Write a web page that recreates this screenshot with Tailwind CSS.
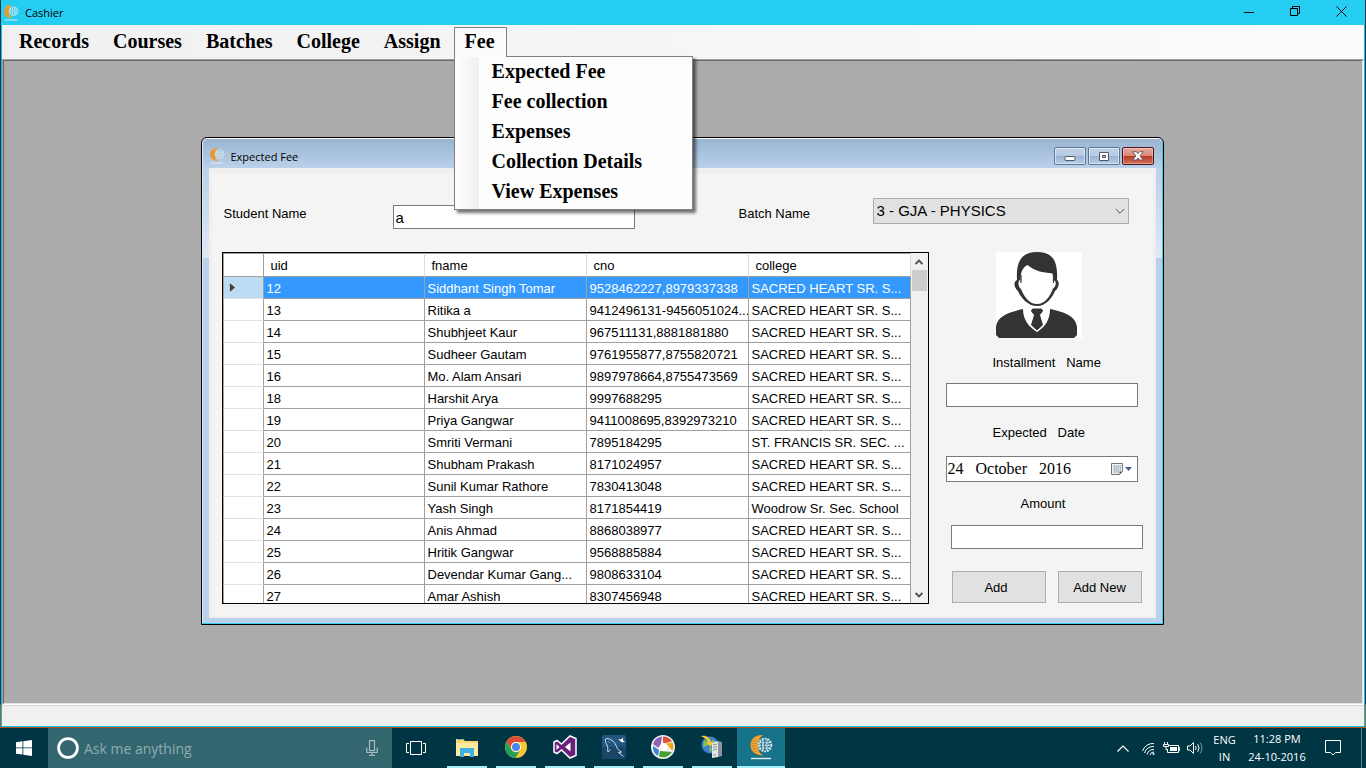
<!DOCTYPE html>
<html lang="en">
<head>
<meta charset="utf-8">
<title>Cashier</title>
<script src="https://cdn.jsdelivr.net/npm/@tailwindcss/browser@4"></script>
</head>
<body class="h-screen flex flex-col overflow-hidden bg-[#003644] font-['Liberation_Sans',sans-serif] text-[13px] text-black">

<svg class="hidden" aria-hidden="true">
  <symbol id="logo" viewBox="0 0 24 26">
    <path d="M14 1C5 .5 1.500 6 1.500 11.300S5 21.500 14 21.500C10.500 19.500 9 15.500 9 11.300S10.500 3.500 14 1Z" fill="#f2a12e"/>
    <path d="M3 7h5M2.500 9.500h5M2.500 12h5M3 14.500h5M4 17h5" stroke="#a88148" stroke-width=".6"/>
    <circle cx="16" cy="11" r="6.400" fill="none" stroke="#d3e4e8" stroke-width="1.800" stroke-dasharray="2 .9"/>
    <path d="M10.500 8.500h11M10 11.200h12M10.500 14h11" stroke="#d3e4e8" stroke-width="1.500" stroke-dasharray="2 .9"/>
    <path d="M14 5.500v11M18 5.500v11" stroke="#d3e4e8" stroke-width="1.400" stroke-dasharray="2 .9"/>
    <path d="M2 24.500h20" stroke="#e4eef2" stroke-width="1.400"/>
  </symbol>
</svg>

<div class="flex-1 min-h-0 flex flex-col border-x border-b [border-image:linear-gradient(#10343f_0%,#10343f_96.7%,#b5561a_96.8%,#b5561a_100%)_1]">
  <header class="h-[25px] shrink-0 flex items-center bg-[#26cdf2] pl-[2px] pr-px font-['Open_Sans',sans-serif] text-[11px]">
    <svg class="w-4 h-[17px] mr-[5px]"><use href="#logo"/></svg>
    <h1 class="flex-1 pl-px pt-px">Cashier</h1>
    <button aria-label="Minimize" class="w-[46px] h-full flex items-center justify-center"><svg class="size-[10px]" viewBox="0 0 10 10"><path d="M0 4.500h10" stroke="#000"/></svg></button>
    <button aria-label="Restore" class="w-[46px] h-full flex items-center justify-center pb-[3px]"><svg class="size-[10px]" viewBox="0 0 10 10" fill="none" stroke="#000"><path d="M.5 2.500h7v7h-7zM2.500 2.500v-2h7v7h-2"/></svg></button>
    <button aria-label="Close" class="w-[46px] h-full flex items-center justify-center pb-[2px]"><svg class="size-[11px]" viewBox="0 0 11 11" stroke="#000"><path d="M.5.5l10 10M10.500.5l-10 10"/></svg></button>
  </header>

  <div class="flex-1 min-h-0 flex flex-col border-x border-b border-[#00c3ee] bg-[#f0f0f0]">
    <nav class="h-[34px] shrink-0 flex items-start pt-[2px] pl-[5px] bg-linear-to-r from-[#f0f0f0] to-[#fcfcfc] font-['Liberation_Serif',serif] font-bold text-[20px] leading-[28px]">
      <button class="px-3">Records</button>
      <button class="px-3">Courses</button>
      <button class="px-3">Batches</button>
      <button class="px-3">College</button>
      <button class="px-3">Assign</button>
      <div class="relative z-20 ml-px leading-[27px]">
        <button class="relative z-10 h-[30px] pl-[10px] pr-[11px] border border-b-0 border-[#808080] bg-[#fbfbfb] flex" aria-expanded="true">Fee</button>
        <ul class="absolute left-0 top-[29px] w-[239px] pt-px pb-px border border-[#808080] bg-[linear-gradient(to_right,#fdfdfd_0px,#f0f0f0_24px,#fdfdfd_24px)] shadow-[3px_3px_3px_rgba(0,0,0,0.55)]">
          <li class="h-[30px]"><button class="w-full pl-[37px] text-left leading-[26px]">Expected Fee</button></li>
          <li class="h-[30px]"><button class="w-full pl-[37px] text-left leading-[26px]">Fee collection</button></li>
          <li class="h-[30px]"><button class="w-full pl-[37px] text-left leading-[26px]">Expenses</button></li>
          <li class="h-[30px]"><button class="w-full pl-[37px] text-left leading-[26px]">Collection Details</button></li>
          <li class="h-[30px]"><button class="w-full pl-[37px] text-left leading-[26px]">View Expenses</button></li>
        </ul>
      </div>
    </nav>

    <main class="flex-1 min-h-0 border-t border-l border-t-[#a0a0a0] border-l-[#a0a0a0] border-r border-b border-r-white border-b-white">
      <div class="h-full border border-t-[#696969] border-l-[#696969] border-r-[#e3e3e3] border-b-[#e3e3e3] bg-[#ababab] flex justify-center items-start pt-[76px] pr-[2px]">

        <section class="w-[963px] border border-black rounded-t-[6px] px-[7px] pb-[6px] bg-[linear-gradient(to_bottom,#98b3d1_0px,#b9d1ea_30px,#dfe9f5_120px,#b9d1ea_120px)] shadow-[inset_0_1px_0_#ffffff,inset_-1px_-1px_0_#35cdea,inset_1px_0_0_#d8ecf5]">
          <div class="h-[30px] flex items-start font-['Open_Sans',sans-serif] text-[11px]">
            <svg class="w-4 h-[17px] mt-[9px] mr-1"><use href="#logo"/></svg>
            <h2 class="flex-1 pl-[2px] mt-[11px] leading-4">Expected Fee</h2>
            <div class="flex gap-[2px] mt-[9px] mr-[2px]">
              <button aria-label="Minimize window" class="w-8 h-[18px] flex items-center justify-center rounded-[2px] border border-[#5b7697] bg-[linear-gradient(#c3d3e6_0%,#b6cae2_48%,#98b3d2_52%,#b5cde8_100%)] shadow-[inset_0_0_0_1px_rgba(255,255,255,0.5)]">
                <svg class="w-3 h-3" viewBox="0 0 12 12"><rect x="1" y="6.500" width="10" height="4" rx="1" fill="#fff" stroke="#535666"/></svg></button>
              <button aria-label="Maximize window" class="w-8 h-[18px] flex items-center justify-center rounded-[2px] border border-[#5b7697] bg-[linear-gradient(#c3d3e6_0%,#b6cae2_48%,#98b3d2_52%,#b5cde8_100%)] shadow-[inset_0_0_0_1px_rgba(255,255,255,0.5)]">
                <svg class="w-3 h-3" viewBox="0 0 12 12" stroke="#535666"><path d="M1.500 2.500h9v8h-9z" fill="#fff"/><path d="M4.500 5.500h3v2h-3z" fill="#a9bfda"/></svg></button>
              <button aria-label="Close window" class="w-8 h-[18px] flex items-center justify-center rounded-[2px] border border-[#4b1418] bg-[linear-gradient(#e8a99c_0%,#d98878_48%,#b93a24_52%,#d1705e_100%)] shadow-[inset_0_0_0_1px_rgba(255,255,255,0.35)]">
                <svg class="w-3 h-[10px]" viewBox="0 0 12 10"><path d="M.8.7h3.600L6 2.700 7.600.7h3.600L8 4.800 11.200 9H7.600L6 7 4.400 9H.8L4 4.800z" fill="#fff" stroke="#535666" stroke-width=".9"/></svg></button>
            </div>
          </div>

          <form class="bg-[#efefef] pt-[6px] px-[3px] pb-[2px]">
            <div class="bg-[#f4f4f4] pt-6 pl-[10px] pb-3">
              <div class="flex items-start h-[31px] mb-[23px]">
                <label for="student" class="w-[171px] pl-[2px] leading-[32px]">Student Name</label>
                <input id="student" value="a" class="w-[242px] h-6 mt-[7px] px-[2px] border border-[#7a7a7a] bg-white text-[15px] outline-none">
                <label for="batch" class="w-[238px] pl-[104px] leading-[32px]">Batch Name</label>
                <div class="relative w-[256px] h-[26px]">
                  <select id="batch" class="appearance-none w-full h-full pl-[3px] pt-px border border-[#adadad] bg-[#e1e1e1] text-[15px] outline-none"><option>3 - GJA - PHYSICS</option></select>
                  <svg class="absolute right-1 top-[10px] w-[10px] h-[7px] pointer-events-none" viewBox="0 0 10 7" fill="none" stroke="#555"><path d="M.8 1L5 5.200 9.200 1"/></svg>
                </div>
              </div>

              <div class="flex items-start">
                <div class="w-[707px] h-[352px] flex border border-black bg-white overflow-hidden">
                  <table class="w-[688px] shrink-0 table-fixed border-separate border-spacing-0 self-start leading-[18px]">
                    <colgroup><col class="w-[41px]"><col class="w-[161px]"><col class="w-[162px]"><col class="w-[162px]"><col class="w-[162px]"></colgroup>
                    <thead><tr class="h-6 *:border-b *:border-[#a0a0a0] *:p-0 *:pl-[7px] *:pt-[2px] *:text-left *:font-normal">
                      <th class="border-r border-l border-t"></th><th class="border-r border-r-[#dcdcdc]! border-t">uid</th><th class="border-r border-r-[#dcdcdc]! border-t">fname</th><th class="border-r border-r-[#dcdcdc]! border-t">cno</th><th class="border-r border-r-[#dcdcdc]! border-t">college</th>
                    </tr></thead>
                    <tbody id="rows"></tbody>
                  </table>
                  <div class="w-[17px] shrink-0 flex flex-col bg-[#f0f0f0]">
                    <button type="button" aria-label="Scroll up" class="h-[17px] flex items-center justify-center"><svg class="w-2 h-[6px]" viewBox="0 0 8 6" fill="none" stroke="#505050" stroke-width="1.800"><path d="M.6 5L4 1.500 7.400 5"/></svg></button>
                    <div class="h-[21px] mx-px bg-[#cdcdcd]"></div>
                    <div class="flex-1"></div>
                    <button type="button" aria-label="Scroll down" class="h-[17px] flex items-center justify-center"><svg class="w-2 h-[6px]" viewBox="0 0 8 6" fill="none" stroke="#505050" stroke-width="1.800"><path d="M.6 1L4 4.500 7.400 1"/></svg></button>
                  </div>
                </div>

                <div class="flex flex-col items-start pl-[17px]">
                  <svg class="size-[86px] ml-[50px] bg-white" viewBox="0 0 86 86" role="img" aria-label="Student photo">
                    <path d="M21 28C20 10 25 0 41 0s21 9 20 28c3 2 2 8-2 11-3 7-9 15-18 15S25 46 22 39c-4-3-5-9-1-11Z" fill="#333"/>
                    <path d="M24.500 28c0-6 1-12 7-15 7 6 15 7.500 25 8.500l1.500 7c2.500 0 2.500 6-1 8-3 8-8 15.500-16 15.500S28 44.500 25 37c-3-2-3.500-9-.5-9Z" fill="#fff"/>
                    <path d="M25 23v8M57.500 22v9" stroke="#333" stroke-width="1.200"/>
                    <path d="M0 86V75c1-11 13-15 27-18 0 11 6 18 14 23 8-5 13-12 13-23 14 3 26 7 27 18v8l-3 3H3l-3-3Z" fill="#333"/>
                    <path d="M36.500 57h9l1 2-3 4 3 10-5.500 5-5.500-5 3-10-3-4Z" fill="#333" stroke="#333"/>
                  </svg>
                  <label for="inst" class="ml-[47px] mt-4 leading-[18px] whitespace-pre">Installment   Name</label>
                  <input id="inst" class="w-48 h-6 mt-[11px] px-1 border border-[#7a7a7a] bg-white outline-none">
                  <label for="date" class="ml-[47px] mt-[17px] leading-[18px] whitespace-pre">Expected   Date</label>
                  <div class="w-48 h-[26px] mt-[14px] flex items-center border border-[#7a7a7a] bg-white pr-[5px]">
                    <input id="date" value="24   October   2016" class="flex-1 min-w-0 pl-px font-['Liberation_Serif',serif] text-[16px] outline-none">
                    <button type="button" aria-label="Open calendar" class="flex items-center gap-[2px]">
                      <svg class="w-3 h-3" viewBox="0 0 12 12"><path d="M.5.5h11v8l-3 3h-8z" fill="#f2f2f4" stroke="#7b7275"/><path d="M2 3h8M2 5h8M2 7h8M2 9h6M3.500 2v8M5.500 2v8M7.500 2v8M9.500 2v6" stroke="#a9b4c9" stroke-width=".8"/><path d="M11.500 8.500h-3v3z" fill="#6b5a5c"/></svg>
                      <svg class="w-[7px] h-1" viewBox="0 0 7 4"><path d="M0 0h7L3.500 4z" fill="#4c5f8c"/></svg>
                    </button>
                  </div>
                  <label for="amount" class="ml-[75px] mt-[13px] leading-[18px]">Amount</label>
                  <input id="amount" class="ml-[5px] w-48 h-6 mt-3 px-1 border border-[#7a7a7a] bg-white outline-none">
                  <div class="flex gap-3 mt-[22px] ml-[6px]">
                    <button type="button" class="w-[94px] h-8 pr-[5px] pt-px border border-[#adadad] bg-[#e1e1e1]">Add</button>
                    <button type="button" class="w-[84px] h-8 pt-px border border-[#adadad] bg-[#e1e1e1]">Add New</button>
                  </div>
                </div>
              </div>
            </div>
          </form>
        </section>
      </div>
    </main>
    <footer class="h-[21px] shrink-0 border-t border-[#d8d8d8] bg-[#f0f0f0]"></footer>
  </div>
</div>

<div class="h-10 shrink-0 flex items-stretch bg-[#003644] font-['Open_Sans',sans-serif] text-white">
  <button aria-label="Start" class="w-12 flex items-center justify-center"><svg class="size-4" viewBox="0 0 16 16" fill="#fff"><path d="M0 2.200L6.500 1.300v6.200H0zM7.300 1.200L16 0v7.500H7.300zM0 8.300h6.500v6.300L0 13.700zM7.300 8.300H16V16l-8.700-1.200z"/></svg></button>
  <label class="w-[344px] flex items-center bg-[#34666f] pl-[9px] pr-[14px]">
    <svg class="size-[22px] shrink-0" viewBox="0 0 22 22"><circle cx="11" cy="11" r="9.400" fill="none" stroke="#fff" stroke-width="2.800"/></svg>
    <input aria-label="Search" placeholder="Ask me anything" class="flex-1 min-w-0 pl-[5px] text-[14px] placeholder:text-[#8fadb3] outline-none">
    <svg class="w-3 h-4" viewBox="0 0 12 16" fill="none" stroke="#a3bbc0" stroke-width="1.200"><path d="M3.500.6h5v10h-5zM.8 7.500v5h10.400v-5M6 12.500V15M3 15.300h6"/></svg>
  </label>
  <button aria-label="Task view" class="w-12 flex items-center justify-center"><svg class="w-5 h-[14px]" viewBox="0 0 20 14" fill="none" stroke="#fff"><path d="M4.500.5h11v13h-11zM3 2.500H.5v9H3M17 2.500h2.500v9H17"/></svg></button>
  <div class="flex gap-[9px] pl-[7px]">
    <button aria-label="File Explorer" class="w-10 flex items-center justify-center border-b-2 border-[#a5ecfb]">
      <svg class="w-[22px] h-[19px]" viewBox="0 0 22 19"><path d="M0 1h7l2 2h13v15H0z" fill="#f7d774"/><path d="M0 5h22v13H0z" fill="#fdeaa0"/><path d="M2 1.500h4" stroke="#4aa5d8"/><path d="M4 19v-9h14v9h-4v-4H8v4z" fill="#3fb0e4"/></svg></button>
    <button aria-label="Chrome" class="w-10 flex items-center justify-center border-b-2 border-[#a5ecfb]">
      <svg class="size-[22px]" viewBox="0 0 22 22"><circle cx="11" cy="11" r="11" fill="#f8c930"/><path d="M1.500 5.500A11 11 0 0 1 20.600 6H11a5 5 0 0 0-4.500 7.300z" fill="#dc4a38"/><path d="M1.500 5.500A11 11 0 0 0 10.500 22l5-8.500a5 5 0 0 1-9 0z" fill="#25a05a"/><circle cx="11" cy="11" r="5" fill="#fff"/><circle cx="11" cy="11" r="4" fill="#4a86ee"/></svg></button>
    <button aria-label="Visual Studio" class="w-10 flex items-center justify-center border-b-2 border-[#a5ecfb]">
      <svg class="w-6 h-6" viewBox="0 0 24 24"><path d="M17 1l6 2.500v17L17 23 8.500 15 4 18.500 1 17V7l3-1.500L8.500 9z" fill="#68217a" stroke="#fff" stroke-width="1.500"/><path d="M17.500 7.500v9L12 12zM3.500 9v6L6.500 12z" fill="#fff"/></svg></button>
    <button aria-label="MySQL Workbench" class="w-10 flex items-center justify-center border-b-2 border-[#a5ecfb]">
      <svg class="size-6" viewBox="0 0 24 24"><rect width="24" height="24" rx="2" fill="#22557f"/><rect y="12" width="24" height="12" rx="2" fill="#1a4568"/><path d="M6 17c-1-3 .5-3-.5-6C3 7 2.500 3.500 5 3.500c5 .5 8 4 9.500 8 1 3 2.500 4 5 5.500l-3 .5 5 4M6 17l2.500-2.500M6.500 6.500l1 1" fill="none" stroke="#cfdfe9" stroke-width="1"/><path d="M16 4l3 .5 2-2v3l2 1-3 1z" fill="#fff"/></svg></button>
    <button aria-label="Picasa" class="w-10 flex items-center justify-center border-b-2 border-[#a5ecfb]">
      <svg class="size-6" viewBox="0 0 24 24"><circle cx="12" cy="12" r="12" fill="#eef1f3"/><path d="M11 1.500A10.500 10.500 0 0 0 2 9l7 5z" fill="#8d62b5"/><path d="M12 1.500A10.500 10.500 0 0 1 21 6.500l-9 2z" fill="#e0503c"/><path d="M21.500 7.500A10.500 10.500 0 0 1 21.500 16L15 8.500z" fill="#f3a41e"/><path d="M21 17a10.500 10.500 0 0 1-13 4.500L9 16z" fill="#46a034"/><path d="M7 21a10.500 10.500 0 0 1-5-10l6 4z" fill="#3b7fd0"/><path d="M12 7.500l4.500 3-1 5.500H9l-1.500-4z" fill="#fff"/></svg></button>
    <button aria-label="Network server" class="w-10 flex items-center justify-center border-b-2 border-[#a5ecfb]">
      <svg class="size-6" viewBox="0 0 24 24"><circle cx="10" cy="10" r="8.500" fill="#3a7fd0"/><path d="M4 5l5 2-2 4-4 1zM9 12l4 2-3 4zM12 4l4 3-3 2z" fill="#7ec24a"/><path d="M1 1c5-1 9 1 10 6l2-1-2 6-5-4 2-.5C7 4 4 3 1 1Z" fill="#f4c52f"/><path d="M12 8l6-2v16l-6 1z" fill="#e1e5e8"/><path d="M18 6l4 1v14l-4 1z" fill="#8b949b"/><path d="M13 10l4-1M13 12.500l4-1M13 15l4-1M13 20h3" stroke="#89929a"/></svg></button>
    <button aria-label="Cashier" class="w-12 -ml-1 flex items-center justify-center bg-[#16738a] border-b-2 border-[#a5ecfb]">
      <svg class="w-6 h-[26px]"><use href="#logo"/></svg></button>
  </div>
  <div class="flex-1"></div>
  <div class="flex items-center text-[11px]">
    <svg class="w-3 h-[7px]" viewBox="0 0 12 7" fill="none" stroke="#fff" stroke-width="1.200"><path d="M.5 6.500L6 1l5.500 5.500"/></svg>
    <svg class="size-[13px] ml-[13px]" viewBox="0 0 13 13" fill="none" stroke="#fff"><path d="M.5 9A11 11 0 0 1 12 1.500M2.500 11A9 9 0 0 1 12 4.500M5 12.500A7 7 0 0 1 12 7.500M8 13a4 4 0 0 1 4-3"/><circle cx="11.500" cy="12" r="1" fill="#fff" stroke="none"/></svg>
    <svg class="w-[17px] h-3 ml-[8px]" viewBox="0 0 17 12" fill="none" stroke="#fff"><path d="M6 3.500h9.500v7h-11V8M15.500 5.500h1v3h-1"/><path d="M7 5h7v4H7z" fill="#fff" stroke="none"/><path d="M1.500 0v2.500M4.500 0v2.500M.5 2.500h5v2h-5zM3 4.500v3h2"/></svg>
    <svg class="w-4 h-[14px] ml-[7px]" viewBox="0 0 16 14" fill="none" stroke="#fff"><path d="M.5 5h2.500L6.500 1.500v11L3 9H.5z"/><path d="M8.500 5q1.300 2 0 4M10.800 3.300q2.500 3.700 0 7.400"/><path d="M13.300 1.800q3.300 5.200 0 10.400" stroke="#7d9aa1"/></svg>
    <div class="w-[43px] text-center leading-[17px]">ENG<br>IN</div>
    <div class="w-[62px] text-center leading-[18px]">11:28 PM<br>24-10-2016</div>
    <svg class="w-4 h-4 ml-[17px] mr-5" viewBox="0 0 16 16" fill="none" stroke="#fff"><path d="M.5.5h15v12h-5L8 15l-2.500-2.500h-5z"/></svg>
    <div class="w-[5px] h-full border-l border-[#55808a]"></div>
  </div>
</div>

<script>
const data = [
 ["12","Siddhant Singh Tomar","9528462227,8979337338","SACRED HEART SR. S..."],
 ["13","Ritika a","9412496131-9456051024...","SACRED HEART SR. S..."],
 ["14","Shubhjeet Kaur","967511131,8881881880","SACRED HEART SR. S..."],
 ["15","Sudheer Gautam","9761955877,8755820721","SACRED HEART SR. S..."],
 ["16","Mo. Alam Ansari","9897978664,8755473569","SACRED HEART SR. S..."],
 ["18","Harshit Arya","9997688295","SACRED HEART SR. S..."],
 ["19","Priya Gangwar","9411008695,8392973210","SACRED HEART SR. S..."],
 ["20","Smriti Vermani","7895184295","ST. FRANCIS SR. SEC. ..."],
 ["21","Shubham Prakash","8171024957","SACRED HEART SR. S..."],
 ["22","Sunil Kumar Rathore","7830413048","SACRED HEART SR. S..."],
 ["23","Yash Singh","8171854419","Woodrow Sr. Sec. School"],
 ["24","Anis Ahmad","8868038977","SACRED HEART SR. S..."],
 ["25","Hritik Gangwar","9568885884","SACRED HEART SR. S..."],
 ["26","Devendar Kumar Gang...","9808633104","SACRED HEART SR. S..."],
 ["27","Amar Ashish","8307456948","SACRED HEART SR. S..."]
];
document.getElementById("rows").innerHTML = data.map((r, i) => {
  const head = i === 0
    ? '<td class="p-0 pl-[5px] border-b border-l border-r border-b-[#e0e0e0] border-r-[#a0a0a0] border-l-[#a0a0a0] bg-[#bcdcf4]"><svg class="w-[7px] h-[11px]" viewBox="0 0 7 11"><path d="M.5.5v10L6.500 5.500z" fill="#404040" stroke="#fff" stroke-width=".5"/></svg></td>'
    : '<td class="p-0 border-b border-l border-r border-b-[#e0e0e0] border-r-[#a0a0a0] border-l-[#a0a0a0]"></td>';
  const cls = i === 0
    ? "p-0 pl-[3px] pt-[2px] border-b border-r border-[#a0a0a0] whitespace-nowrap overflow-hidden bg-[#3399ff] text-white"
    : "p-0 pl-[3px] pt-[2px] border-b border-r border-[#a0a0a0] whitespace-nowrap overflow-hidden";
  return '<tr class="h-[22px]">' + head + r.map(c => '<td class="' + cls + '">' + c + "</td>").join("") + "</tr>";
}).join("");
</script>
</body>
</html>
